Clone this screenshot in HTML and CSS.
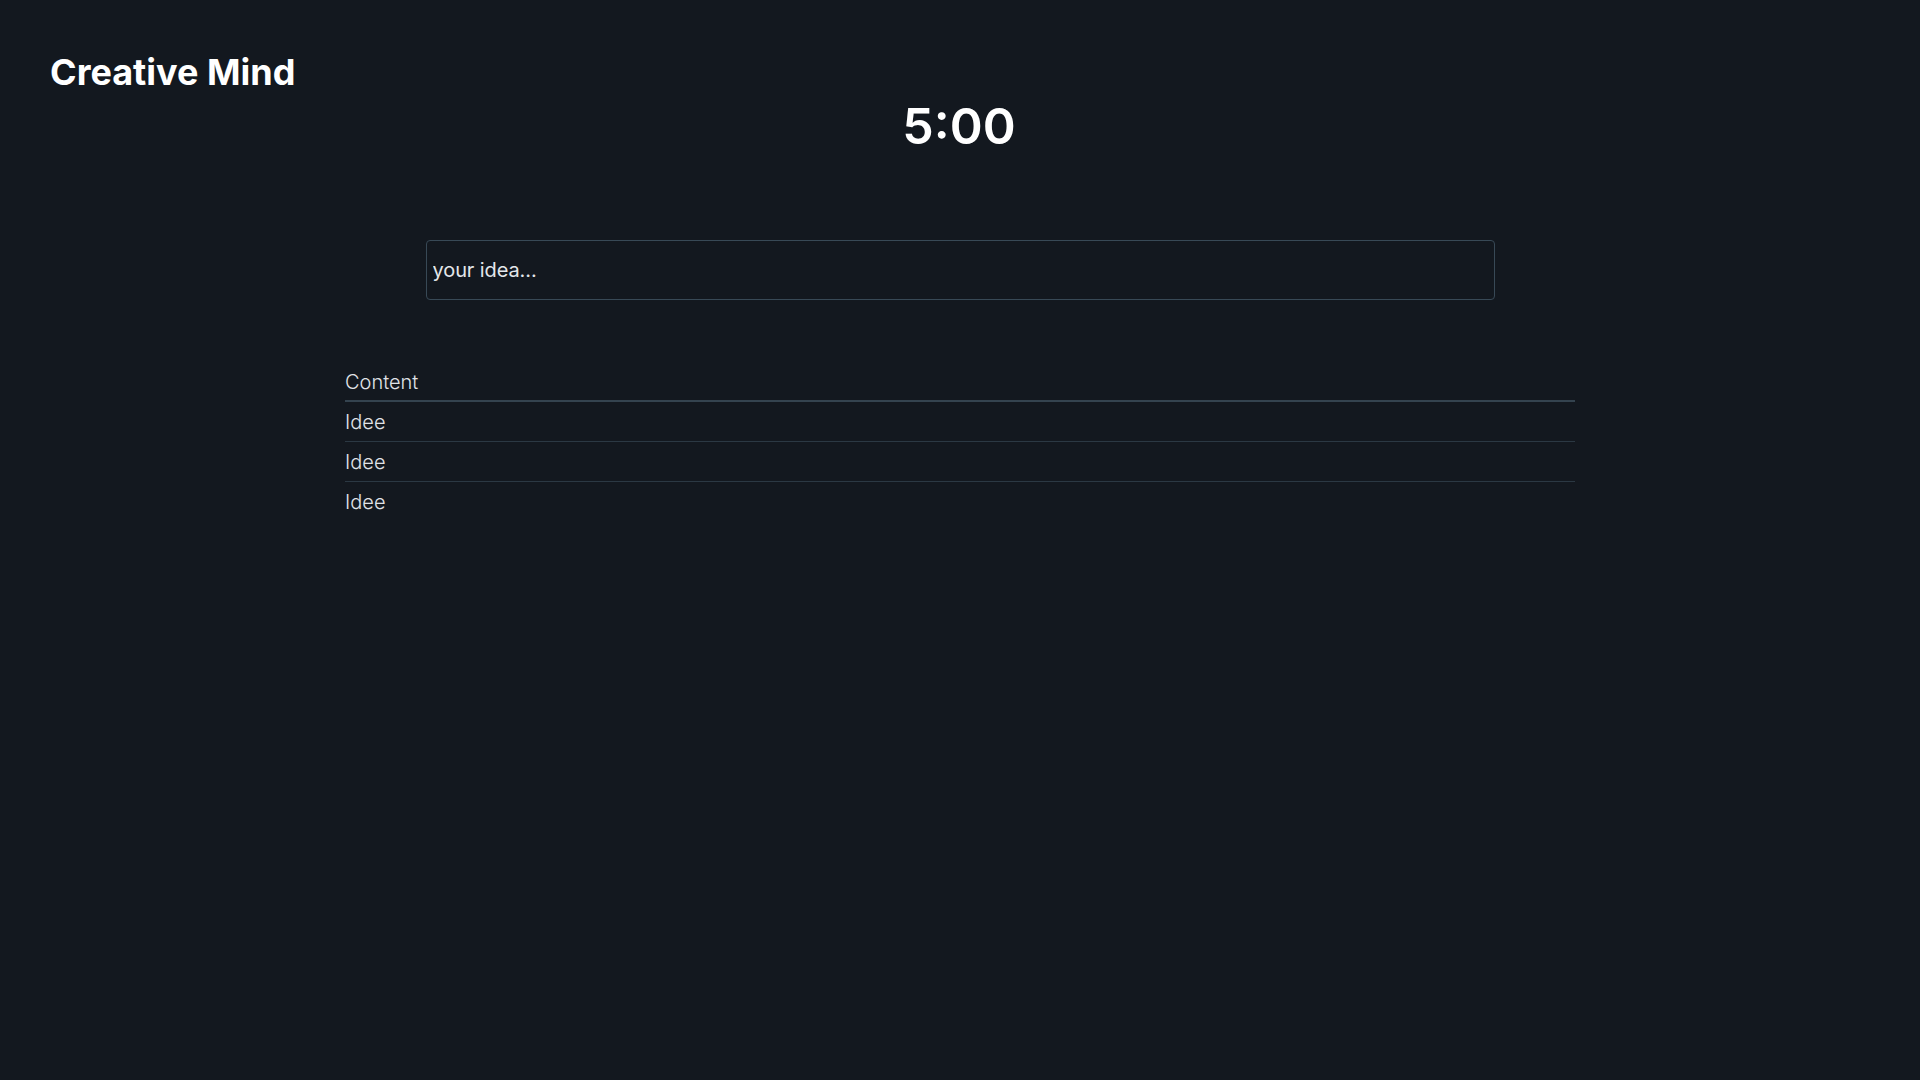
FILE: index.html
```html
<!DOCTYPE html>
<html lang="en">
<head>
<meta charset="utf-8">
<title>Creative Mind</title>
<link rel="stylesheet" href="styles.css">
</head>
<body>
<div class="page">
  <header class="top">
    <h1 class="brand">Creative Mind</h1>
  </header>
  <div class="timer">5:00</div>
  <form class="idea-form">
    <input class="idea-input" type="text" placeholder="your idea...">
  </form>
  <table class="ideas">
    <thead>
      <tr><th>Content</th></tr>
    </thead>
    <tbody>
      <tr><td>Idee</td></tr>
      <tr><td>Idee</td></tr>
      <tr><td>Idee</td></tr>
    </tbody>
  </table>
</div>
</body>
</html>
```

FILE: styles.css
```css
html, body {
  margin: 0;
  padding: 0;
  background: #13181f;
  height: 100%;
}
body {
  font-family: Inter, "Noto Sans", sans-serif;
  color: #e0e3e8;
}
.page {
  display: flex;
  flex-direction: column;
  align-items: center;
  padding: 51px 50px 0;
}
.top {
  align-self: stretch;
}
.brand {
  margin: 0;
  font-size: 36px;
  line-height: 43px;
  font-weight: 700;
  color: #ffffff;
}
.timer {
  margin-top: 2px;
  margin-right: 2px;
  font-size: 50px;
  line-height: 60px;
  font-weight: 600;
  color: #ffffff;
}
.idea-form {
  margin-top: 84px;
  width: 1069px;
}
.idea-input {
  box-sizing: border-box;
  width: 100%;
  height: 60px;
  margin: 0;
  padding: 0 6px;
  background: #13181f;
  border: 1px solid #384956;
  border-radius: 4px;
  font-family: Inter, "Noto Sans", sans-serif;
  font-size: 20px;
  letter-spacing: -0.1px;
  color: #e6e9ed;
  outline: none;
}
.idea-input::placeholder {
  color: #e4e7eb;
  opacity: 1;
}
.ideas {
  margin-top: 61px;
  width: 1230px;
  border-collapse: collapse;
  font-size: 20px;
  font-weight: 300;
  line-height: 22px;
  color: #e0e3e8;
}
.ideas th,
.ideas td {
  text-align: left;
  padding: 9px 0 8px;
  font-weight: 300;
}
.ideas th {
  padding: 10px 0 7px;
  border-bottom: 2px solid #34434f;
}
.ideas td {
  border-bottom: 1px solid #2b3843;
}
.ideas tbody tr:last-child td {
  border-bottom: none;
}
```
